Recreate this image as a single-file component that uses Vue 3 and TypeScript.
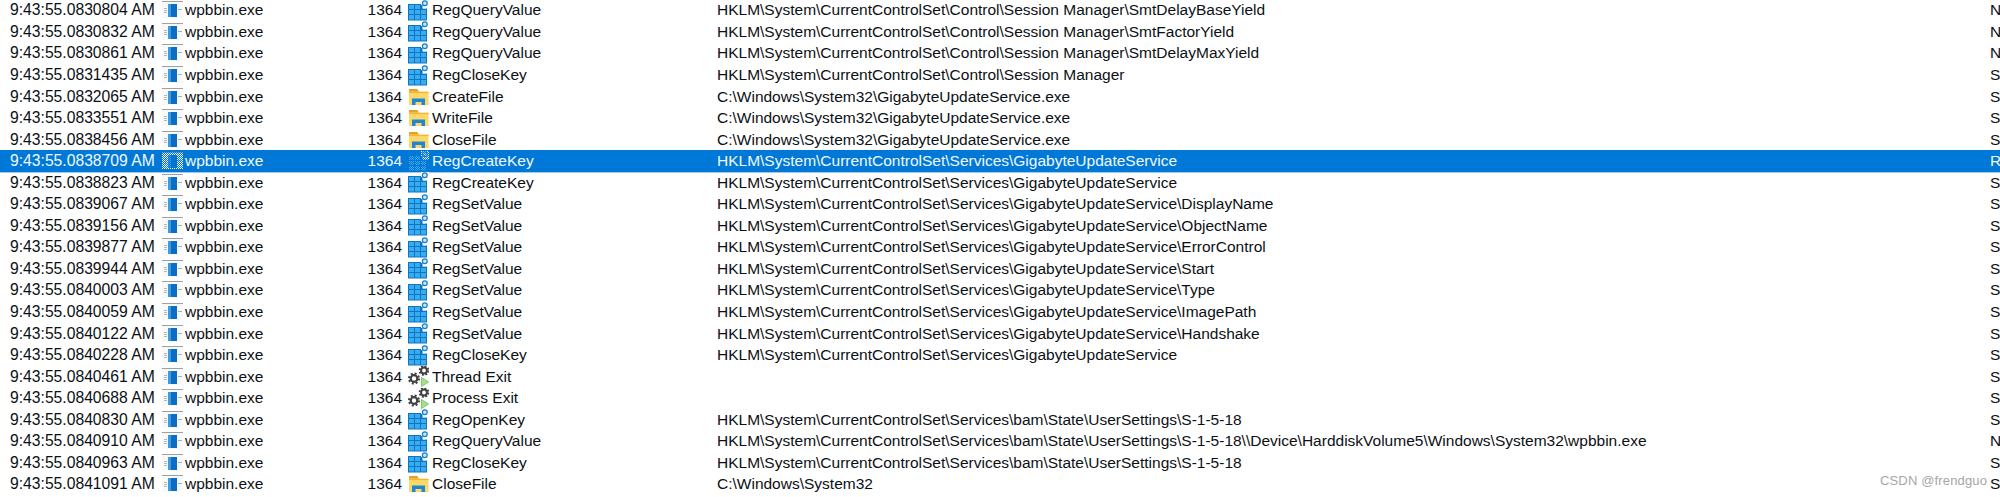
<script setup lang="ts">
type Op = 'reg' | 'file' | 'gear'
interface Row { t: string; kind: Op; op: string; path: string; res: string; sel?: boolean }
const S = 'HKLM\\System\\CurrentControlSet\\'
const G = S + 'Services\\GigabyteUpdateService'
const F = 'C:\\Windows\\System32\\GigabyteUpdateService.exe'
const U = S + 'Services\\bam\\State\\UserSettings\\S-1-5-18'
const rows: Row[] = [
  { t: '0830804', kind: 'reg', op: 'RegQueryValue', path: S + 'Control\\Session Manager\\SmtDelayBaseYield', res: 'N' },
  { t: '0830832', kind: 'reg', op: 'RegQueryValue', path: S + 'Control\\Session Manager\\SmtFactorYield', res: 'N' },
  { t: '0830861', kind: 'reg', op: 'RegQueryValue', path: S + 'Control\\Session Manager\\SmtDelayMaxYield', res: 'N' },
  { t: '0831435', kind: 'reg', op: 'RegCloseKey', path: S + 'Control\\Session Manager', res: 'S' },
  { t: '0832065', kind: 'file', op: 'CreateFile', path: F, res: 'S' },
  { t: '0833551', kind: 'file', op: 'WriteFile', path: F, res: 'S' },
  { t: '0838456', kind: 'file', op: 'CloseFile', path: F, res: 'S' },
  { t: '0838709', kind: 'reg', op: 'RegCreateKey', path: G, res: 'R', sel: true },
  { t: '0838823', kind: 'reg', op: 'RegCreateKey', path: G, res: 'S' },
  { t: '0839067', kind: 'reg', op: 'RegSetValue', path: G + '\\DisplayName', res: 'S' },
  { t: '0839156', kind: 'reg', op: 'RegSetValue', path: G + '\\ObjectName', res: 'S' },
  { t: '0839877', kind: 'reg', op: 'RegSetValue', path: G + '\\ErrorControl', res: 'S' },
  { t: '0839944', kind: 'reg', op: 'RegSetValue', path: G + '\\Start', res: 'S' },
  { t: '0840003', kind: 'reg', op: 'RegSetValue', path: G + '\\Type', res: 'S' },
  { t: '0840059', kind: 'reg', op: 'RegSetValue', path: G + '\\ImagePath', res: 'S' },
  { t: '0840122', kind: 'reg', op: 'RegSetValue', path: G + '\\Handshake', res: 'S' },
  { t: '0840228', kind: 'reg', op: 'RegCloseKey', path: G, res: 'S' },
  { t: '0840461', kind: 'gear', op: 'Thread Exit', path: '', res: 'S' },
  { t: '0840688', kind: 'gear', op: 'Process Exit', path: '', res: 'S' },
  { t: '0840830', kind: 'reg', op: 'RegOpenKey', path: U, res: 'S' },
  { t: '0840910', kind: 'reg', op: 'RegQueryValue', path: U + '\\\\Device\\HarddiskVolume5\\Windows\\System32\\wpbbin.exe', res: 'N' },
  { t: '0840963', kind: 'reg', op: 'RegCloseKey', path: U, res: 'S' },
  { t: '0841091', kind: 'file', op: 'CloseFile', path: 'C:\\Windows\\System32', res: 'S' },
]
</script>

<template>
  <div class="log">
    <svg width="0" height="0" class="defs">
      <defs>
        <pattern id="dither" width="2" height="2" patternUnits="userSpaceOnUse">
          <rect width="1" height="1" fill="#0078d7" />
          <rect x="1" y="1" width="1" height="1" fill="#0078d7" />
        </pattern>
      </defs>
    </svg>
    <div v-for="r in rows" :key="r.t" class="row" :class="{ sel: r.sel }">
      <span class="time">9:43:55.{{ r.t }} AM</span>
      <svg class="ico" width="21" height="20" viewBox="0 0 21 20">
        <rect x="0" y="1" width="21" height="17" fill="#f8f9fa" />
        <rect x="0" y="1" width="21" height="1" fill="#a0a0a0" />
        <rect x="2" y="8" width="3" height="1" fill="#b0b8be" />
        <rect x="2" y="10" width="3" height="1" fill="#b0b8be" />
        <rect x="2" y="12" width="3" height="1" fill="#b0b8be" />
        <rect x="6" y="4" width="9" height="13" fill="#0a6fc4" />
        <rect x="6" y="4" width="3" height="13" fill="#3f9bdd" />
        <rect x="16" y="9" width="4" height="1" fill="#a8b0b6" />
        <rect v-if="r.sel" width="21" height="20" fill="url(#dither)" />
      </svg>
      <span class="name">wpbbin.exe</span>
      <span class="pid">1364</span>
      <svg v-if="r.kind === 'reg'" class="ico op-ico" width="21" height="21" viewBox="0 0 21 21">
        <rect x="0.500" y="4.500" width="18" height="15.500" fill="#38acf0" stroke="#0f74c2" />
        <path d="M6.500 4.500v15.500M12.500 4.500v15.500M0.500 9.500h18M0.500 14.500h18" fill="none" stroke="#0f74c2" stroke-width="1" />
        <rect x="13" y="0" width="8" height="8.500" fill="#fff" />
        <rect x="13" y="5" width="1.500" height="4.500" fill="#0f74c2" />
        <circle cx="16.800" cy="3.300" r="2.400" fill="#c8e6f8" stroke="#1380c8" stroke-width="1.200" />
        <rect v-if="r.sel" width="21" height="21" fill="url(#dither)" />
      </svg>
      <svg v-else-if="r.kind === 'file'" class="ico op-ico" width="21" height="20" viewBox="0 0 21 20">
        <path d="M1 2h8l2 2.500h9.500V18H1z" fill="#fdd868" />
        <path d="M1 2h8l2 2.500H1z" fill="#e4a128" />
        <path d="M1 5.500h19.500" stroke="#efb63a" stroke-width="1.200" />
        <path d="M4 18v-6.500h13V18h-3.500v-3h-6v3z" fill="#1f86d2" />
      </svg>
      <svg v-else class="ico op-ico gear" width="21" height="21" viewBox="0 0 21 21">
        <g fill="none" stroke="#404040">
          <circle cx="6" cy="12.500" r="3.300" stroke-width="2.200" />
          <circle cx="6" cy="12.500" r="5" stroke-width="2" stroke-dasharray="2 1.930" />
          <circle cx="16" cy="4.500" r="2.900" stroke-width="2" />
          <circle cx="16" cy="4.500" r="4.400" stroke-width="1.900" stroke-dasharray="1.900 1.550" />
        </g>
        <path d="M13.500 11.500l7 4.500-7 4.500z" fill="#a6e08e" stroke="#6cc050" stroke-width="0.800" />
      </svg>
      <span class="op">{{ r.op }}</span>
      <span class="path">{{ r.path }}</span>
      <span class="res">{{ r.res }}</span>
    </div>
    <span class="mark">CSDN @frendguo</span>
  </div>
</template>

<style>
html, body { margin: 0; background: #fff; }
</style>

<style scoped>
.log {
  position: relative;
  width: 2000px;
  height: 497px;
  overflow: hidden;
  background: #fff;
  color: #0c1014;
  font-family: "Liberation Sans", Arial, sans-serif;
  font-size: 15.500px;
}
.defs { position: absolute; }
.row {
  display: grid;
  grid-template-columns: 152px 23px 177px 40px 30px 285px 1273px 1fr;
  align-items: center;
  height: 21.56px;
  padding-left: 10px;
  white-space: nowrap;
  position: relative;
  top: -0.4px;
}
.row.sel {
  background: #0078d7;
  color: #f2f8fd;
  box-shadow: 0 1px 0 #9fcbee;
}
.time { font-size: 15.700px; }
.ico { display: block; }
.op-ico { margin-left: 6px; grid-column: 5; }
.pid { text-align: right; }
.op { grid-column: 6; }
.res { overflow: hidden; }
.mark {
  position: absolute;
  left: 1880px;
  top: 473px;
  font-size: 13px;
  letter-spacing: 0.15px;
  white-space: nowrap;
  color: #a6a6a6;
  font-family: "Liberation Sans", sans-serif;
}
</style>
